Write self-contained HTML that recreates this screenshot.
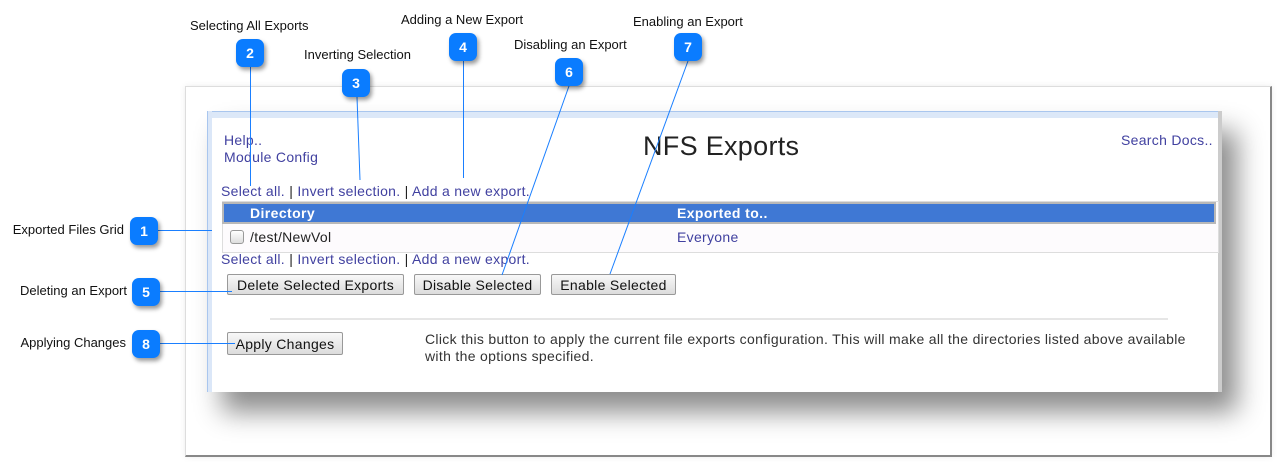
<!DOCTYPE html>
<html><head><meta charset="utf-8"><style>
body{margin:0;width:1279px;height:463px;background:#fff;position:relative;overflow:hidden;font-family:"Liberation Sans",sans-serif}
.a{position:absolute;white-space:nowrap}
.lbl{font-size:13px;color:#111}
.r{text-align:right;width:200px}
.b{position:absolute;width:28px;height:28px;border-radius:7px;background:#0a7cff;color:#fff;font-size:14px;font-weight:bold;text-align:center;line-height:28px;box-shadow:2px 3px 4px rgba(0,0,0,.4)}
.lk{color:#4141a0;font-size:14px;letter-spacing:0.3px}
.btn{position:absolute;height:21px;border:1px solid #999;border-radius:2px;background:linear-gradient(#f8f8f8,#dcdcdc);font-size:14px;color:#111;line-height:21px;text-align:center;box-sizing:border-box;letter-spacing:0.3px}
</style></head><body>
<div class="a" style="left:185px;top:86px;width:1084px;height:368px;border:1px solid #ddd;border-right:2px solid #888;border-bottom:2px solid #888;box-shadow:0 0 6px rgba(0,0,0,.08)"></div>
<div class="a" style="left:207px;top:111px;width:1015px;height:281px;background:#fff;box-shadow:15px 20px 25px rgba(0,0,0,.45)">
 <div class="a" style="left:0;top:0;width:1015px;height:6px;background:#dce8f8;border-top:1px solid #a9c6ee"></div>
 <div class="a" style="left:0;top:0;width:4px;height:281px;background:#dbe7f8;border-left:1px solid #a9c6ee"></div>
 <div class="a" style="right:0;top:0;width:4px;height:281px;background:#ccc"></div>
</div>
<div class="a lk" style="left:224px;top:132px">Help..</div>
<div class="a lk" style="left:224px;top:149px">Module Config</div>
<div class="a lk" style="left:1121px;top:132px">Search Docs..</div>
<div class="a" style="left:643px;top:131px;font-size:27px;color:#222;letter-spacing:0.3px">NFS Exports</div>
<div class="a lk" style="left:221px;top:183px">Select all. <span style="color:#222">|</span> Invert selection. <span style="color:#222">|</span> Add a new export.</div>
<div class="a" style="left:222px;top:201px;width:995px;height:50px;border:1px solid #ddd;background:#fdfbfd"></div>
<div class="a" style="left:222px;top:202px;width:994px;height:22px;background:#3f78d4;border:2px solid #b8b8b8;box-sizing:border-box"></div>
<div class="a" style="left:250px;top:205px;color:#fff;font-weight:bold;font-size:14px;letter-spacing:0.4px">Directory</div>
<div class="a" style="left:677px;top:205px;color:#fff;font-weight:bold;font-size:14px;letter-spacing:0.4px">Exported to..</div>
<div class="a" style="left:230px;top:230px;width:12px;height:12px;border:1px solid #999;border-radius:3px;background:linear-gradient(#fff,#ddd)"></div>
<div class="a" style="left:250px;top:229px;font-size:14px;color:#222;letter-spacing:0.3px">/test/NewVol</div>
<div class="a lk" style="left:677px;top:229px">Everyone</div>
<div class="a lk" style="left:221px;top:251px">Select all. <span style="color:#222">|</span> Invert selection. <span style="color:#222">|</span> Add a new export.</div>
<div class="btn" style="left:227px;top:274px;width:177px">Delete Selected Exports</div>
<div class="btn" style="left:414px;top:274px;width:127px">Disable Selected</div>
<div class="btn" style="left:551px;top:274px;width:125px">Enable Selected</div>
<div class="a" style="left:270px;top:318px;width:898px;height:2px;background:#e6e6e6"></div>
<div class="btn" style="left:227px;top:332px;width:116px;height:23px;line-height:23px">Apply Changes</div>
<div class="a" style="left:425px;top:331px;font-size:14px;color:#333;line-height:17px;letter-spacing:0.32px">Click this button to apply the current file exports configuration. This will make all the directories listed above available<br>with the options specified.</div>
<svg class="a" style="left:0;top:0" width="1279" height="463"><g stroke="#1a7fff" stroke-width="1" fill="none">
<line x1="157" y1="230.5" x2="212" y2="230.5"/><line x1="159" y1="291.5" x2="232" y2="291.5"/><line x1="159" y1="343.5" x2="235" y2="343.5"/>
<line x1="250.5" y1="67" x2="250.5" y2="186"/><line x1="357" y1="97" x2="360" y2="180"/><line x1="463.5" y1="61" x2="463.5" y2="178"/>
<line x1="569" y1="86" x2="502" y2="275"/><line x1="688" y1="61" x2="610" y2="274"/></g></svg>
<div class="a lbl" style="left:190px;top:18px">Selecting All Exports</div>
<div class="a lbl" style="left:304px;top:47px">Inverting Selection</div>
<div class="a lbl" style="left:401px;top:12px">Adding a New Export</div>
<div class="a lbl" style="left:514px;top:37px">Disabling an Export</div>
<div class="a lbl" style="left:633px;top:14px">Enabling an Export</div>
<div class="a lbl r" style="left:-76px;top:222px">Exported Files Grid</div>
<div class="a lbl r" style="left:-73px;top:283px">Deleting an Export</div>
<div class="a lbl r" style="left:-74px;top:335px">Applying Changes</div>
<div class="b" style="left:130px;top:217px">1</div>
<div class="b" style="left:236px;top:39px">2</div>
<div class="b" style="left:342px;top:69px">3</div>
<div class="b" style="left:449px;top:33px">4</div>
<div class="b" style="left:132px;top:278px">5</div>
<div class="b" style="left:555px;top:58px">6</div>
<div class="b" style="left:674px;top:33px">7</div>
<div class="b" style="left:132px;top:330px">8</div>
</body></html>
